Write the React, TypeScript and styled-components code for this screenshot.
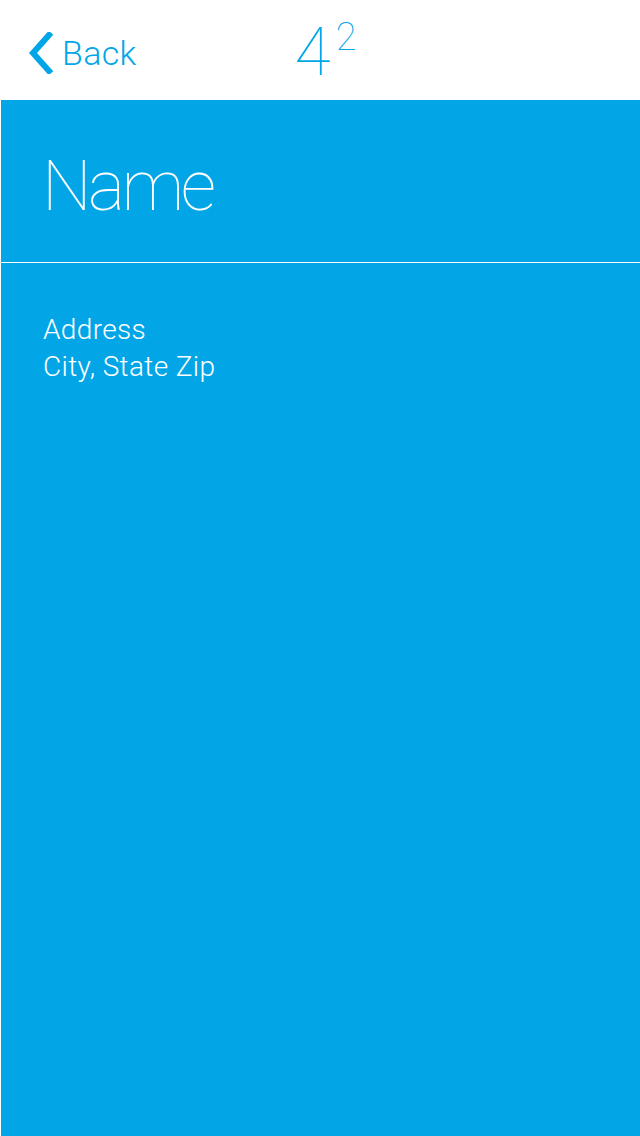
import { FunctionComponent } from 'react';
import styled, { createGlobalStyle } from 'styled-components';

const BLUE = '#02a6e7';

const GlobalStyle = createGlobalStyle`
    html, body {
        margin: 0;
        padding: 0;
        background: #ffffff;
    }
    body {
        font-family: Roboto, 'Liberation Sans', sans-serif;
        -webkit-font-smoothing: antialiased;
    }
`;

const App: FunctionComponent = () => {
    return (
        <Page>
            <GlobalStyle />
            <NavBar>
                <BackButton type="button">
                    <svg width="26" height="42" viewBox="0 0 26 42" aria-hidden="true">
                        <path d="M21 3 L5 21 L21 39" fill="none" stroke={BLUE} strokeWidth="6" strokeLinecap="square" />
                    </svg>
                    <span>Back</span>
                </BackButton>
                <Logo>
                    4<sup>2</sup>
                </Logo>
            </NavBar>
            <Panel>
                <NameSection>
                    <Name>Name</Name>
                </NameSection>
                <AddressSection>
                    <AddressLine>Address</AddressLine>
                    <AddressLine>City, State Zip</AddressLine>
                </AddressSection>
            </Panel>
        </Page>
    );
};

export default App;

const Page = styled.div`
    width: 640px;
    height: 1136px;
    display: flex;
    flex-direction: column;
    overflow: hidden;
`;

const NavBar = styled.header`
    height: 100px;
    flex: none;
    display: flex;
    align-items: center;
    padding-left: 28px;
    box-sizing: border-box;
`;

const BackButton = styled.button`
    display: flex;
    align-items: center;
    gap: 8px;
    padding: 0;
    margin: 0;
    border: none;
    background: none;
    cursor: pointer;
    color: ${BLUE};
    font-family: Roboto, 'Liberation Sans', sans-serif;
    font-weight: 300;
    font-size: 34px;
    letter-spacing: 0.3px;
    margin-top: 6px;

    svg {
        display: block;
    }
`;

const Logo = styled.div`
    margin-left: 158px;
    color: ${BLUE};
    font-family: Roboto, 'Liberation Sans', sans-serif;
    font-weight: 100;
    font-size: 66px;
    line-height: 1;
    margin-top: 6px;

    sup {
        font-size: 38px;
        vertical-align: top;
        position: relative;
        top: -2px;
        margin-left: 5px;
    }
`;

const Panel = styled.main`
    flex: 1;
    margin-left: 1px;
    background: ${BLUE};
    display: flex;
    flex-direction: column;
`;

const NameSection = styled.section`
    height: 163px;
    border-bottom: 1px solid #ffffff;
    box-sizing: border-box;
    display: flex;
    align-items: center;
    padding-left: 41px;
`;

const Name = styled.h1`
    margin: 0;
    color: #ffffff;
    font-family: Roboto, 'Liberation Sans', sans-serif;
    font-weight: 100;
    font-size: 70px;
    letter-spacing: -3.5px;
    line-height: 1;
    margin-top: 10px;
`;

const AddressSection = styled.section`
    padding: 48px 0 0 42px;
    display: flex;
    flex-direction: column;
`;

const AddressLine = styled.div`
    color: #ffffff;
    font-family: Roboto, 'Liberation Sans', sans-serif;
    font-weight: 300;
    font-size: 28px;
    letter-spacing: 0.35px;
    line-height: 37px;
`;
